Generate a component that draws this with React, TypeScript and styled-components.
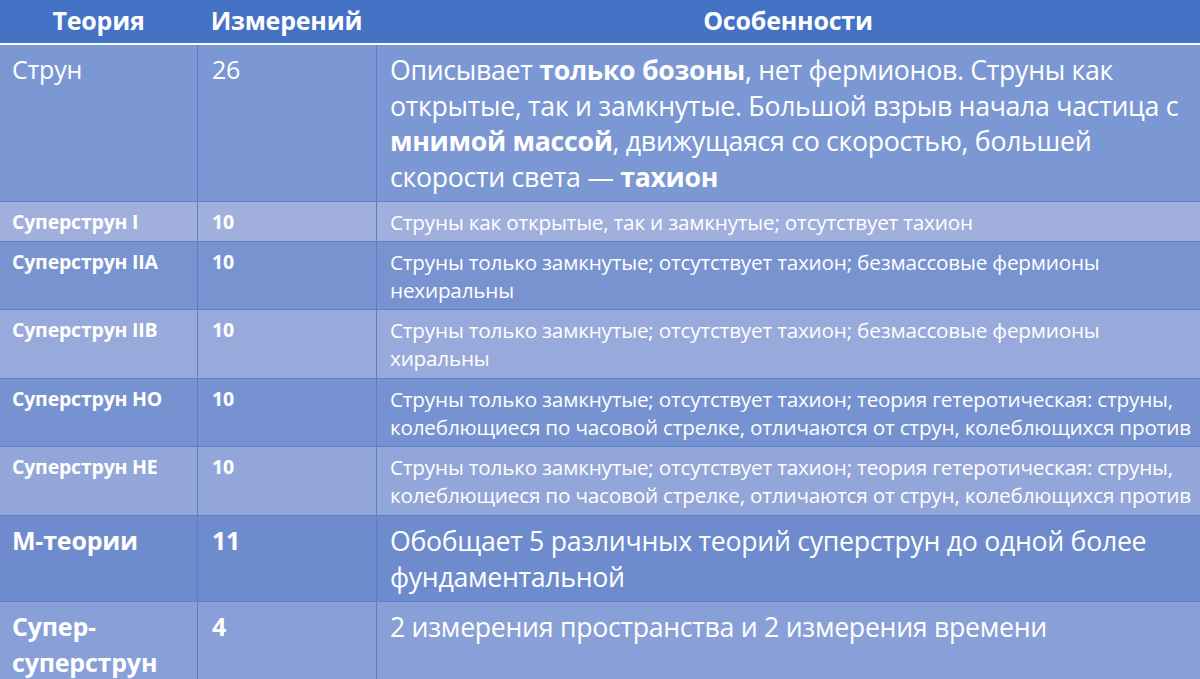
import React from "react";
import styled, { createGlobalStyle, css } from "styled-components";

const Global = createGlobalStyle`
  html, body { margin: 0; padding: 0; }
  body {
    width: 1200px;
    height: 679px;
    overflow: hidden;
    background: #8aa0d8;
    font-family: "Open Sans", "Noto Sans", sans-serif;
    color: #ffffff;
  }
`;

const Table = styled.div`
  width: 1200px;
  height: 679px;
  overflow: hidden;
  display: flex;
  flex-direction: column;
`;

const HeaderRow = styled.div`
  display: grid;
  grid-template-columns: 197px 179px 1fr;
  height: 43px;
  background: #4472c4;
  border-bottom: 2px solid #ffffff;
  flex: none;
`;

const HeadCell = styled.div`
  display: flex;
  align-items: center;
  justify-content: center;
  font-weight: 700;
  font-size: 25px;
  letter-spacing: -0.2px;
  padding-bottom: 3px;
`;

const Body = styled.div`
  display: flex;
  flex-direction: column;
`;

const Row = styled.div<{ $bg: string; $h: number }>`
  display: grid;
  grid-template-columns: 197px 179px 1fr;
  height: ${(p) => p.$h}px;
  background: ${(p) => p.$bg};
  border-top: 1.5px solid #5d82cb;
  box-sizing: border-box;
  flex: none;
  &:first-of-type { border-top: none; }
`;

type Size = "big" | "small";

const cellBase = css<{ $size: Size }>`
  box-sizing: border-box;
  padding-top: ${(p) => (p.$size === "big" ? "7px" : "6px")};
  b { font-weight: 700; }
`;

const NameCell = styled.div<{ $size: Size; $bold: boolean }>`
  ${cellBase};
  padding-left: 12px;
  padding-right: 6px;
  font-weight: ${(p) => (p.$bold ? 700 : 400)};
  font-size: ${(p) => (p.$size === "big" ? "25px" : "19.5px")};
  line-height: ${(p) => (p.$size === "big" ? "35.5px" : "28px")};
  letter-spacing: ${(p) => (p.$size === "big" ? "-0.2px" : "-0.2px")};
`;

const DimCell = styled(NameCell)`
  padding-left: 14px;
  border-left: 1.5px solid #5a7fca;
`;

const DescCell = styled.div<{ $size: Size }>`
  ${cellBase};
  padding-left: 13px;
  padding-right: 2px;
  border-left: 1.5px solid #5a7fca;
  font-weight: 400;
  font-size: ${(p) => (p.$size === "big" ? "26.7px" : "20.7px")};
  line-height: ${(p) => (p.$size === "big" ? "35.5px" : "28px")};
  letter-spacing: ${(p) => (p.$size === "big" ? "-0.3px" : "-0.2px")};
`;

type RowData = {
  name: React.ReactNode;
  dim: string;
  desc: React.ReactNode;
  size: Size;
  bold: boolean;
  bg: string;
  h: number;
};

const rows: RowData[] = [
  {
    name: "Струн",
    dim: "26",
    desc: (
      <>
        Описывает <b>только бозоны</b>, нет фермионов. Струны как открытые, так и замкнутые. Большой взрыв
        начала частица с <b>мнимой массой</b>, движущаяся со скоростью, большей скорости света — <b>тахион</b>
      </>
    ),
    size: "big",
    bold: false,
    bg: "#7c98d4",
    h: 156,
  },
  {
    name: "Суперструн I",
    dim: "10",
    desc: "Струны как открытые, так и замкнутые; отсутствует тахион",
    size: "small",
    bold: true,
    bg: "#a0afdc",
    h: 40,
  },
  {
    name: "Суперструн IIA",
    dim: "10",
    desc: "Струны только замкнутые; отсутствует тахион; безмассовые фермионы нехиральны",
    size: "small",
    bold: true,
    bg: "#7893d0",
    h: 68,
  },
  {
    name: "Суперструн IIB",
    dim: "10",
    desc: "Струны только замкнутые; отсутствует тахион; безмассовые фермионы хиральны",
    size: "small",
    bold: true,
    bg: "#98a9db",
    h: 69,
  },
  {
    name: "Суперструн НО",
    dim: "10",
    desc: "Струны только замкнутые; отсутствует тахион; теория гетеротическая: струны, колеблющиеся по часовой стрелке, отличаются от струн, колеблющихся против",
    size: "small",
    bold: true,
    bg: "#7792d0",
    h: 68,
  },
  {
    name: "Суперструн НЕ",
    dim: "10",
    desc: "Струны только замкнутые; отсутствует тахион; теория гетеротическая: струны, колеблющиеся по часовой стрелке, отличаются от струн, колеблющихся против",
    size: "small",
    bold: true,
    bg: "#93a6d9",
    h: 69,
  },
  {
    name: "М-теории",
    dim: "11",
    desc: "Обобщает 5 различных теорий суперструн до одной более фундаментальной",
    size: "big",
    bold: true,
    bg: "#6e8ccd",
    h: 86,
  },
  {
    name: "Супер-суперструн",
    dim: "4",
    desc: "2 измерения пространства и 2 измерения времени",
    size: "big",
    bold: true,
    bg: "#899fd8",
    h: 90,
  },
];

export default function App() {
  return (
    <>
      <Global />
      <Table>
        <HeaderRow>
          <HeadCell>Теория</HeadCell>
          <HeadCell>Измерений</HeadCell>
          <HeadCell>Особенности</HeadCell>
        </HeaderRow>
        <Body>
          {rows.map((r, i) => (
            <Row key={i} $bg={r.bg} $h={r.h}>
              <NameCell $size={r.size} $bold={r.bold}>
                {r.name}
              </NameCell>
              <DimCell $size={r.size} $bold={r.bold}>
                {r.dim}
              </DimCell>
              <DescCell $size={r.size}>{r.desc}</DescCell>
            </Row>
          ))}
        </Body>
      </Table>
    </>
  );
}
